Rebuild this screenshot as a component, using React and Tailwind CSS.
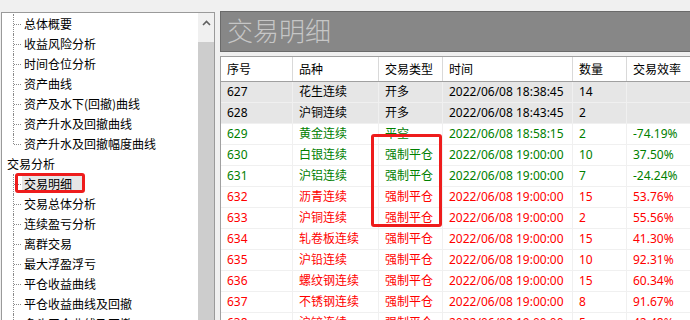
import React from "react";

const FONT = { fontFamily: '"Noto Sans", "Noto Sans CJK SC", sans-serif' };
const CJK = { fontFamily: '"Noto Sans CJK SC", "Noto Sans", sans-serif' };

const T = "2022/06/08 19:00:00";
const rows = [
  ["627", "花生连续", "开多", "2022/06/08 18:38:45", "14", "", "k", true],
  ["628", "沪铜连续", "开多", "2022/06/08 18:43:45", "2", "", "k", true],
  ["629", "黄金连续", "平空", "2022/06/08 18:58:15", "2", "-74.19%", "g"],
  ["630", "白银连续", "强制平仓", T, "10", "37.50%", "g"],
  ["631", "沪铝连续", "强制平仓", T, "7", "-24.24%", "g"],
  ["632", "沥青连续", "强制平仓", T, "15", "53.76%", "r"],
  ["633", "沪铜连续", "强制平仓", T, "2", "55.56%", "r"],
  ["634", "轧卷板连续", "强制平仓", T, "15", "41.30%", "r"],
  ["635", "沪铅连续", "强制平仓", T, "10", "92.31%", "r"],
  ["636", "螺纹钢连续", "强制平仓", T, "15", "60.34%", "r"],
  ["637", "不锈钢连续", "强制平仓", T, "8", "91.67%", "r"],
  ["638", "沪锌连续", "强制平仓", T, "5", "42.48%", "r"],
];

const headers = ["序号", "品种", "交易类型", "时间", "数量", "交易效率"];
const widths = ["w-[72px]", "w-[86px]", "w-[64px]", "w-[130px]", "w-[54px]", "w-[80px]"];

const group1 = [
  "总体概要",
  "收益风险分析",
  "时间仓位分析",
  "资产曲线",
  "资产及水下(回撤)曲线",
  "资产升水及回撤曲线",
  "资产升水及回撤幅度曲线",
];
const group2 = [
  "交易明细",
  "交易总体分析",
  "连续盈亏分析",
  "离群交易",
  "最大浮盈浮亏",
  "平仓收益曲线",
  "平仓收益曲线及回撤",
  "多头平仓曲线及回撤",
];

function Child({ label, last, selected }) {
  return (
    <div className="flex h-[20px] items-center shrink-0">
      <div className="relative w-[20px] h-full shrink-0">
        <div
          className={
            "absolute left-[11px] top-0 border-l border-dotted border-[#8a8a8a] " +
            (last ? "h-[10px]" : "h-[20px]")
          }
        />
        <div className="absolute left-[12px] top-[10px] w-[7px] border-t border-dotted border-[#8a8a8a]" />
      </div>
      <span
        className={
          "text-[12px] leading-[16px] text-black whitespace-nowrap " +
          (selected ? "bg-[#e6e6e6] pl-[2px] pr-[10px]" : "pl-[2px]")
        }
        style={CJK}
      >
        {label}
      </span>
    </div>
  );
}

export default function App() {
  return (
    <div className="relative w-[690px] h-[320px] overflow-hidden bg-[#f0f0f0] flex items-start" style={FONT}>
      {/* Left tree panel */}
      <div className="mt-[12px] ml-[1px] w-[214px] h-[308px] border-l border-t border-r border-[#9a9a9a] bg-white flex shrink-0">
        <div className="w-[196px] h-full flex flex-col pt-[1px] overflow-hidden">
          {group1.map((g, i) => (
            <Child key={g} label={g} last={i === group1.length - 1} />
          ))}
          <div className="flex h-[20px] items-center pl-[5px] shrink-0">
            <span className="text-[12px] leading-[16px] text-black" style={CJK}>
              交易分析
            </span>
          </div>
          {group2.map((g, i) => (
            <Child key={g} label={g} selected={i === 0} />
          ))}
        </div>
        <div className="w-[16px] h-full flex flex-col bg-[#f0f0f0]">
          <div className="h-[29px] flex items-start justify-center pt-[7px]">
            <svg width="9" height="6" viewBox="0 0 9 6">
              <path d="M1 5 L4.5 1.5 L8 5" fill="none" stroke="#606060" strokeWidth="1.6" />
            </svg>
          </div>
          <div className="flex-1 bg-[#cdcdcd]" />
        </div>
      </div>

      {/* Right area */}
      <div className="ml-[5px] flex-1 flex flex-col">
        <div className="mt-[11px] h-[41px] bg-[#878787] border border-[#6a6a6a] border-r-0 flex items-center pl-[6px]">
          <span className="text-[26px] leading-[30px] text-[#c6c6c6] font-light -mt-[4px]" style={CJK}>
            交易明细
          </span>
        </div>
        <div className="mt-[4px] border-l border-t border-[#a0a0a0] bg-white flex flex-col h-[264px] overflow-hidden">
          <div className="flex h-[25px] border-b border-[#a0a0a0] bg-white shrink-0">
            {headers.map((h, i) => (
              <div
                key={h}
                className={
                  widths[i] +
                  " shrink-0 h-full flex items-center pl-[6px] text-[12px] text-black border-r border-[#d9d9d9]"
                }
                style={CJK}
              >
                {h}
              </div>
            ))}
          </div>
          {rows.map((r) => {
            const color = r[6] === "g" ? "text-[#008000]" : r[6] === "r" ? "text-[#ff0000]" : "text-black";
            const bg = r[7] ? "bg-[#e6e6e6]" : "bg-white";
            return (
              <div key={r[0]} className={"flex h-[21px] border-b border-[#f0f0f0] shrink-0 " + bg}>
                {r.slice(0, 6).map((c, i) => (
                  <div
                    key={i}
                    className={
                      widths[i] +
                      " shrink-0 h-full flex items-center pl-[6px] text-[12px] whitespace-nowrap border-r border-[#f0f0f0] " +
                      color
                    }
                  >
                    {c}
                  </div>
                ))}
              </div>
            );
          })}
        </div>
      </div>

      {/* annotation boxes */}
      <div className="absolute left-[15px] top-[173px] w-[70px] h-[20px] border-[3px] border-[#ee1c1c] rounded-[3px]" />
      <div className="absolute left-[371px] top-[134px] w-[71px] h-[93px] border-[3px] border-[#ee1c1c] rounded-[3px]" />
    </div>
  );
}
